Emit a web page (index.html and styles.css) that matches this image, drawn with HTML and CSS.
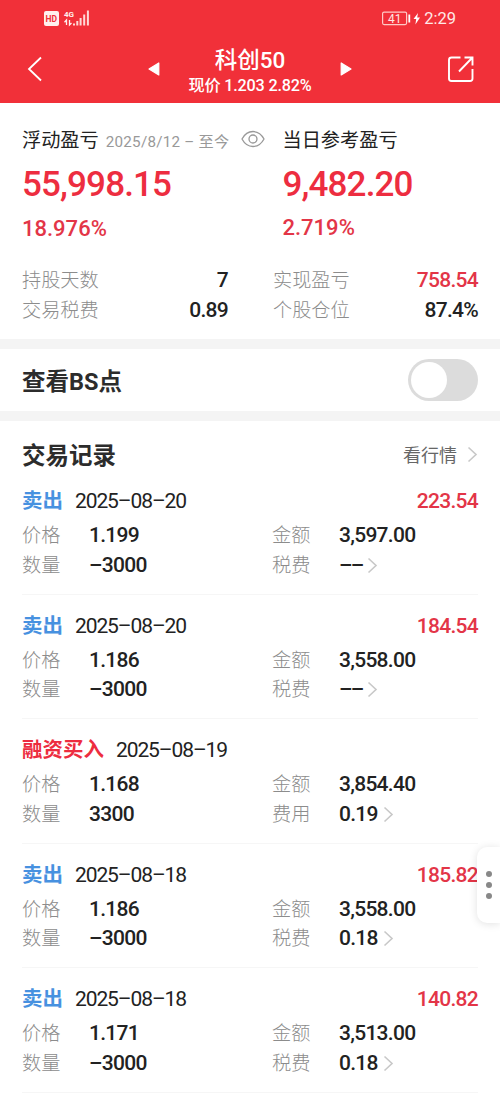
FILE: index.html
```html
<!DOCTYPE html>
<html lang="zh-CN">
<head>
<meta charset="utf-8">
<title>科创50</title>
<link rel="stylesheet" href="styles.css">
</head>
<body>
<header class="top">
  <div class="status">
    <svg class="signal" width="46" height="20" viewBox="0 0 46 20">
      <rect x="0" y="3" width="15" height="15" rx="2" fill="#fff0ee"/>
      <text class="hd" x="1.4" y="14">HD</text>
      <text class="net" x="20" y="9">4G</text>
      <path d="M22.500 17v-5l-2 2.200M25.500 12v5l2-2" fill="none" stroke="#fff0ee" stroke-width="1.300"/>
      <path d="M30 17.500v-2M33.300 17.500v-4.500M36.600 17.500v-7.500M40.200 17.500v-11M43.900 17.500v-15" stroke="#ffd9d6" stroke-width="2"/>
    </svg>
    <div class="status-right">
      <svg width="40" height="18" viewBox="0 0 40 18">
        <rect x="-1.400" y="3.100" width="24" height="12.500" rx="1.500" fill="none" stroke="#ffc9c6" stroke-width="1.200"/>
        <path d="M25.300 5.500v8" stroke="#fff" stroke-width="1.800"/>
        <path d="M34 4l-4.500 6h2.700l-.8 5.500 4.600-7h-2.800z" fill="#fff"/>
        <text class="battery" x="4" y="13.900">41</text>
      </svg>
      <span class="clock">2:29</span>
    </div>
  </div>
  <nav class="nav">
    <svg class="back" width="16" height="26" viewBox="0 0 16 26"><path d="M14 1.500L2 13l12 11.500" fill="none" stroke="#fff" stroke-width="1.800"/></svg>
    <svg class="prev" width="12" height="16" viewBox="0 0 12 16"><path d="M10.800 2v12L1 8z" fill="#fff" stroke="#fff" stroke-width="1.200" stroke-linejoin="round"/></svg>
    <div class="heading">
      <h1 class="name">科创50</h1>
      <p class="quote">现价 1.203 2.82%</p>
    </div>
    <svg class="next" width="12" height="16" viewBox="0 0 12 16"><path d="M1.200 2v12L11 8z" fill="#fff" stroke="#fff" stroke-width="1.200" stroke-linejoin="round"/></svg>
    <svg class="share" width="28" height="28" viewBox="0 0 28 28"><path d="M13.500 2.500H4.500Q2 2.500 2 5v18.500Q2 26 4.500 26H23q2.500 0 2.500-2.500V14M12 16.500L25 3M17.500 2.500h8V10.500" fill="none" stroke="#fff" stroke-width="1.900"/></svg>
  </nav>
</header>

<main>
  <section class="summary">
    <div class="totals">
      <div class="total">
        <div class="total-label">浮动盈亏 <span class="range">2025/8/12 – 至今</span>
          <svg class="eye" width="24" height="18" viewBox="0 0 24 18"><path d="M1 9Q5 1.500 12 1.500T23 9Q19 16.500 12 16.500T1 9z" fill="none" stroke="#999" stroke-width="1.300"/><circle cx="12" cy="9" r="4" fill="none" stroke="#999" stroke-width="1.300"/></svg>
        </div>
        <div class="amount">55,998.15</div>
        <div class="percent">18.976%</div>
      </div>
      <div class="total today">
        <div class="total-label">当日参考盈亏</div>
        <div class="amount">9,482.20</div>
        <div class="percent">2.719%</div>
      </div>
    </div>
    <dl class="stats">
      <div class="stat"><dt>持股天数</dt><dd>7</dd></div>
      <div class="stat"><dt>实现盈亏</dt><dd class="up">758.54</dd></div>
      <div class="stat"><dt>交易税费</dt><dd>0.89</dd></div>
      <div class="stat"><dt>个股仓位</dt><dd>87.4%</dd></div>
    </dl>
  </section>

  <section class="points">
    <h2 class="title">查看BS点</h2>
    <div class="switch"><div class="knob"></div></div>
  </section>

  <section class="records">
    <div class="records-head">
      <h2 class="title">交易记录</h2>
      <div class="market">看行情<svg class="chev" width="11" height="17" viewBox="0 0 11 17"><path d="M1.500 1.500l7.500 7-7.500 7"/></svg></div>
    </div>
    <article class="record">
      <div class="record-head"><b class="sell">卖出</b><time>2025–08–20</time><span class="gain">223.54</span></div>
      <dl class="fields">
        <dt>价格</dt><dd>1.199</dd><dt>金额</dt><dd>3,597.00</dd>
        <dt>数量</dt><dd>–3000</dd><dt>税费</dt><dd><span class="none">––</span><svg class="chev" width="11" height="17" viewBox="0 0 11 17"><path d="M1.500 1.500l7.500 7-7.500 7"/></svg></dd>
      </dl>
    </article>
    <article class="record">
      <div class="record-head"><b class="sell">卖出</b><time>2025–08–20</time><span class="gain">184.54</span></div>
      <dl class="fields">
        <dt>价格</dt><dd>1.186</dd><dt>金额</dt><dd>3,558.00</dd>
        <dt>数量</dt><dd>–3000</dd><dt>税费</dt><dd><span class="none">––</span><svg class="chev" width="11" height="17" viewBox="0 0 11 17"><path d="M1.500 1.500l7.500 7-7.500 7"/></svg></dd>
      </dl>
    </article>
    <article class="record">
      <div class="record-head"><b class="buy">融资买入</b><time>2025–08–19</time></div>
      <dl class="fields">
        <dt>价格</dt><dd>1.168</dd><dt>金额</dt><dd>3,854.40</dd>
        <dt>数量</dt><dd>3300</dd><dt>费用</dt><dd>0.19<svg class="chev" width="11" height="17" viewBox="0 0 11 17"><path d="M1.500 1.500l7.500 7-7.500 7"/></svg></dd>
      </dl>
    </article>
    <article class="record">
      <div class="record-head"><b class="sell">卖出</b><time>2025–08–18</time><span class="gain">185.82</span></div>
      <dl class="fields">
        <dt>价格</dt><dd>1.186</dd><dt>金额</dt><dd>3,558.00</dd>
        <dt>数量</dt><dd>–3000</dd><dt>税费</dt><dd>0.18<svg class="chev" width="11" height="17" viewBox="0 0 11 17"><path d="M1.500 1.500l7.500 7-7.500 7"/></svg></dd>
      </dl>
    </article>
    <article class="record">
      <div class="record-head"><b class="sell">卖出</b><time>2025–08–18</time><span class="gain">140.82</span></div>
      <dl class="fields">
        <dt>价格</dt><dd>1.171</dd><dt>金额</dt><dd>3,513.00</dd>
        <dt>数量</dt><dd>–3000</dd><dt>税费</dt><dd>0.18<svg class="chev" width="11" height="17" viewBox="0 0 11 17"><path d="M1.500 1.500l7.500 7-7.500 7"/></svg></dd>
      </dl>
    </article>
  </section>
</main>
<aside class="handle"><i></i><i></i><i></i></aside>
</body>
</html>
```
FILE: styles.css
```css
* { box-sizing: border-box; margin: 0; padding: 0; }
body {
  width: 500px;
  height: 1111px;
  overflow: hidden;
  background: #fff;
  color: #222;
  font-family: Roboto, "Noto Sans CJK SC", sans-serif;
  font-size: 21px;
}
svg { display: block; flex: none; }

.top { height: 103px; background: #f13039; color: #fff; }
.status { display: flex; justify-content: space-between; height: 36px; padding: 8px 44px 0; }
.status-right { display: flex; align-items: center; height: 20px; }
.hd { font: bold 8.500px Roboto, sans-serif; fill: #f13039; }
.net { font: bold 8px Roboto, sans-serif; fill: #fff0ee; }
.battery { font: 12px Roboto, sans-serif; fill: #ffe6e4; }
.status-right svg { overflow: visible; }
.clock { font-size: 16.500px; line-height: 22px; padding-top: 2px; color: #ffe9e7; }

.nav { display: flex; align-items: center; height: 66px; padding: 0 25px 0 27px; }
.prev { margin-left: 105px; }
.heading { width: 156px; margin: 4px 12px 0; text-align: center; }
.name { font-size: 22.500px; line-height: 28px; font-weight: 500; }
.quote { font-size: 16.200px; line-height: 23px; font-weight: 500; letter-spacing: -.2px; }
.share { margin-left: auto; }

.summary { height: 236px; padding: 23px 22px 0; }
.totals { display: grid; grid-template-columns: 260.500px 1fr; height: 139px; }
.total-label { display: flex; align-items: baseline; height: 32px; line-height: 29px; font-size: 19.200px; white-space: nowrap; }
.range { margin-left: 7px; font-size: 15.200px; letter-spacing: .25px; color: #999; }
.eye { align-self: flex-start; margin: 4px 0 0 12px; }
.amount { height: 50px; line-height: 54px; font-size: 35px; letter-spacing: -.85px; font-weight: 500; color: #ed2d40; }
.percent { height: 36px; line-height: 42px; font-size: 22px; font-weight: 500; color: #e33547; }
.today .percent { line-height: 40px; }
.stats { display: grid; grid-template-columns: 206px 205px; column-gap: 45px; grid-auto-rows: 29.500px; }
.stat { display: flex; justify-content: space-between; align-items: baseline; line-height: 29px; }
dt { color: #8c8c8c; font-size: 19.200px; font-weight: 300; }
.stat dt { padding-top: 1px; }
dd { font-weight: 500; letter-spacing: -.72px; }
.stat .up, .gain { color: #e33547; }

.points { display: flex; justify-content: space-between; align-items: center; height: 82px; padding: 0 22px; border: solid #f4f4f4; border-width: 10px 0; }
.title { font-size: 23.500px; font-weight: 700; color: #2c2c2c; }
.switch { width: 70px; height: 42px; padding: 3px; border-radius: 21px; background: #dcdcdc; }
.knob { width: 36px; height: 36px; border-radius: 50%; background: #fff; }

.records { padding: 17px 22px 0; }
.records-head { display: flex; justify-content: space-between; align-items: center; height: 32px; }
.market { display: flex; align-items: center; gap: 10px; font-size: 18px; color: #666; }
.chev { fill: none; stroke: #c8c8c8; stroke-width: 1.600; }
.record { height: 124.500px; border-bottom: 1px solid #f6f6f6; padding-top: 14px; }
.record-head { display: flex; align-items: baseline; height: 37px; line-height: 34px; }
.record-head b { margin-right: 12px; font-size: 20.500px; }
.sell { color: #4791e0; }
.buy { color: #ed2d40; }
.record-head time { letter-spacing: -1.100px; }
.gain { margin-left: auto; font-weight: 500; letter-spacing: -.72px; }
.fields { display: grid; grid-template-columns: 67px 183px 67px 1fr; grid-auto-rows: 29.500px; align-items: baseline; line-height: 29px; }
.fields dd { display: flex; align-items: center; gap: 5px; }
.none { letter-spacing: -1.800px; }

.handle {
  position: absolute; right: 0; top: 847px;
  display: flex; flex-direction: column; align-items: center; justify-content: center; gap: 5px;
  width: 23px; height: 76px;
  border-radius: 10px 0 0 10px; background: #fff;
  box-shadow: 0 1px 8px rgba(0, 0, 0, .12);
}
.handle i { width: 6px; height: 6px; border-radius: 50%; background: #888; }
```
